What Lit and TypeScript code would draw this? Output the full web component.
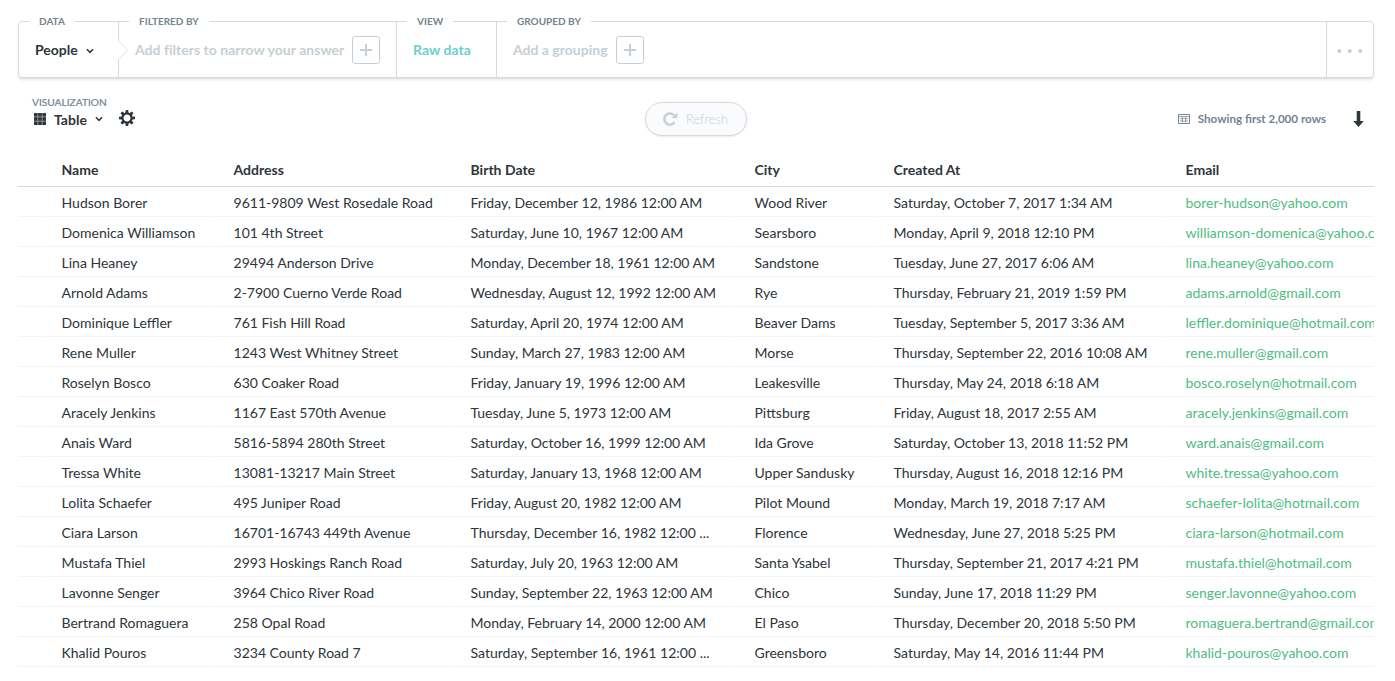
import { LitElement, html, css, svg } from "lit";
import { customElement } from "lit/decorators.js";

const COLUMNS = ["Name", "Address", "Birth Date", "City", "Created At", "Email"];

const ROWS: string[][] = [
  ["Hudson Borer", "9611-9809 West Rosedale Road", "Friday, December 12, 1986 12:00 AM", "Wood River", "Saturday, October 7, 2017 1:34 AM", "borer-hudson@yahoo.com"],
  ["Domenica Williamson", "101 4th Street", "Saturday, June 10, 1967 12:00 AM", "Searsboro", "Monday, April 9, 2018 12:10 PM", "williamson-domenica@yahoo.com"],
  ["Lina Heaney", "29494 Anderson Drive", "Monday, December 18, 1961 12:00 AM", "Sandstone", "Tuesday, June 27, 2017 6:06 AM", "lina.heaney@yahoo.com"],
  ["Arnold Adams", "2-7900 Cuerno Verde Road", "Wednesday, August 12, 1992 12:00 AM", "Rye", "Thursday, February 21, 2019 1:59 PM", "adams.arnold@gmail.com"],
  ["Dominique Leffler", "761 Fish Hill Road", "Saturday, April 20, 1974 12:00 AM", "Beaver Dams", "Tuesday, September 5, 2017 3:36 AM", "leffler.dominique@hotmail.com"],
  ["Rene Muller", "1243 West Whitney Street", "Sunday, March 27, 1983 12:00 AM", "Morse", "Thursday, September 22, 2016 10:08 AM", "rene.muller@gmail.com"],
  ["Roselyn Bosco", "630 Coaker Road", "Friday, January 19, 1996 12:00 AM", "Leakesville", "Thursday, May 24, 2018 6:18 AM", "bosco.roselyn@hotmail.com"],
  ["Aracely Jenkins", "1167 East 570th Avenue", "Tuesday, June 5, 1973 12:00 AM", "Pittsburg", "Friday, August 18, 2017 2:55 AM", "aracely.jenkins@gmail.com"],
  ["Anais Ward", "5816-5894 280th Street", "Saturday, October 16, 1999 12:00 AM", "Ida Grove", "Saturday, October 13, 2018 11:52 PM", "ward.anais@gmail.com"],
  ["Tressa White", "13081-13217 Main Street", "Saturday, January 13, 1968 12:00 AM", "Upper Sandusky", "Thursday, August 16, 2018 12:16 PM", "white.tressa@yahoo.com"],
  ["Lolita Schaefer", "495 Juniper Road", "Friday, August 20, 1982 12:00 AM", "Pilot Mound", "Monday, March 19, 2018 7:17 AM", "schaefer-lolita@hotmail.com"],
  ["Ciara Larson", "16701-16743 449th Avenue", "Thursday, December 16, 1982 12:00 ...", "Florence", "Wednesday, June 27, 2018 5:25 PM", "ciara-larson@hotmail.com"],
  ["Mustafa Thiel", "2993 Hoskings Ranch Road", "Saturday, July 20, 1963 12:00 AM", "Santa Ysabel", "Thursday, September 21, 2017 4:21 PM", "mustafa.thiel@hotmail.com"],
  ["Lavonne Senger", "3964 Chico River Road", "Sunday, September 22, 1963 12:00 AM", "Chico", "Sunday, June 17, 2018 11:29 PM", "senger.lavonne@yahoo.com"],
  ["Bertrand Romaguera", "258 Opal Road", "Monday, February 14, 2000 12:00 AM", "El Paso", "Thursday, December 20, 2018 5:50 PM", "romaguera.bertrand@gmail.com"],
  ["Khalid Pouros", "3234 County Road 7", "Saturday, September 16, 1961 12:00 ...", "Greensboro", "Saturday, May 14, 2016 11:44 PM", "khalid-pouros@yahoo.com"],
];

const chevron = html`<svg class="chevron" width="8" height="8" viewBox="0 0 8 8">
  <path d="M0.9 2.3 L4 5.4 L7.1 2.3" fill="none" stroke="currentColor" stroke-width="1.5" />
</svg>`;

const plus = html`<span class="plus"><svg width="12" height="12" viewBox="0 0 12 12">
  <path d="M6 0V12M0 6H12" stroke="currentColor" stroke-width="2" />
</svg></span>`;

const gear = html`<svg class="gear" width="16" height="16" viewBox="-8 -8 16 16">
  <circle r="4.6" fill="none" stroke="currentColor" stroke-width="2.2" />
  ${[0, 45, 90, 135, 180, 225, 270, 315].map(
    (a) => svg`<path d="M-1.6 -5 L-1.2 -8 H1.2 L1.6 -5Z" fill="currentColor" transform="rotate(${a})" />`
  )}
</svg>`;

@customElement("app-root")
export class AppRoot extends LitElement {
  static styles = css`
    :host {
      display: block;
      box-sizing: border-box;
      width: 100%;
      height: 681px;
      padding: 21px 21px 0 18px;
      overflow: hidden;
      background: #fff;
      color: #2e353b;
      font: 14px/17px Lato, sans-serif;
    }
    svg { display: block; flex: none; }
    .bar {
      display: flex;
      box-sizing: border-box;
      height: 57px;
      border: 1px solid #d5dae0;
      border-radius: 4px;
      box-shadow: 0 1px 0 #dfe3e7, 0 2px 3px rgba(0, 0, 0, 0.09);
      font-weight: 700;
    }
    .section {
      position: relative;
      display: flex;
      align-items: center;
      box-sizing: border-box;
      padding: 0 16px;
      border-right: 1px solid #d5dae0;
    }
    .legend {
      position: absolute;
      top: -8px;
      left: 10px;
      padding: 0 10px;
      background: #fff;
      color: #74838f;
      font-size: 10px;
      line-height: 14px;
      white-space: nowrap;
    }
    .data { width: 100px; }
    .filters { width: 278px; }
    .view { width: 100px; color: #6bd0cf; letter-spacing: 0.06px; }
    .view .legend { letter-spacing: 0; }
    .groups { flex: 1; }
    .more { width: 46px; padding: 3px 0 0; justify-content: center; border-right: 0; color: #c7cfd4; }
    .notch { position: absolute; left: -1px; top: 18px; }
    .muted { color: #c7cfd4; white-space: nowrap; }
    .filters .muted { letter-spacing: 0.025px; }
    .chevron { margin: 2px 0 0 8px; }
    .plus {
      display: flex;
      flex: none;
      align-items: center;
      justify-content: center;
      box-sizing: border-box;
      width: 28px;
      height: 28px;
      margin-left: 8px;
      border: 1px solid #c7cfd4;
      border-radius: 3px;
      color: #c7cfd4;
    }
    .tools {
      display: grid;
      grid-template-columns: 1fr auto 1fr;
      height: 76px;
    }
    .viz { padding: 18px 0 0 14px; }
    .viz-label { font-size: 10.2px; line-height: 13px; color: #74838f; -webkit-text-stroke: 0.2px #74838f; }
    .viz-row { display: flex; align-items: center; height: 18px; padding: 1px 0 0 2px; font-weight: 700; }
    .viz-row .chevron { margin-top: 0; }
    .viz-name { margin-left: 8px; padding-top: 2px; line-height: 18px; }
    .gear { margin: -2px 0 0 16px; }
    .refresh {
      display: flex;
      align-items: center;
      box-sizing: border-box;
      width: 102px;
      height: 34px;
      margin-top: 24px;
      padding-left: 17px;
      border: 1px solid #d5dae0;
      border-radius: 17px;
      background: #f9fbfc;
      box-shadow: 0 1px 2px rgba(0, 0, 0, 0.08);
      color: #c7cfd4;
    }
    .refresh-text { margin-left: 8px; font-size: 12.9px; font-weight: 300; }
    .status {
      display: flex;
      align-items: center;
      justify-content: flex-end;
      height: 18px;
      margin-top: 32px;
      padding-right: 10.5px;
      color: #74838f;
      font-size: 11.62px;
      font-weight: 700;
    }
    .status-text { margin: 0 26.5px 0 7.5px; padding-bottom: 1px; }
    .table { overflow: hidden; font-size: 14.03px; }
    .row {
      display: grid;
      grid-template-columns: 25px 172px 237px 284px 139px 292px 208px;
      height: 30px;
    }
    .head { height: 33px; border-bottom: 1px solid #d5dae0; font-weight: 700; box-sizing: border-box; }
    .cell {
      box-sizing: border-box;
      margin-right: 1px;
      padding: 7px 0 0 18.5px;
      border-bottom: 1px solid #f2f3f4;
      white-space: nowrap;
    }
    .head .cell { border: 0; }
    .email { color: #4fbd83; }
  `;

  render() {
    return html`
      <div class="bar">
        <div class="section data"><span class="legend">DATA</span>People${chevron}</div>
        <div class="section filters">
          <svg class="notch" width="11" height="20" viewBox="0 0 11 20">
            <path d="M0 1H1V19H0Z" fill="#fff" />
            <path d="M0.5 0.5 L9.5 10 L0.5 19.5" fill="#fff" stroke="#e1e5e9" />
          </svg>
          <span class="legend">FILTERED BY</span>
          <span class="muted">Add filters to narrow your answer</span>${plus}
        </div>
        <div class="section view"><span class="legend">VIEW</span>Raw data</div>
        <div class="section groups">
          <span class="legend">GROUPED BY</span><span class="muted">Add a grouping</span>${plus}
        </div>
        <div class="section more">
          <svg width="26" height="4" viewBox="0 0 26 4" fill="currentColor">
            <circle cx="2.4" cy="2" r="2" /><circle cx="12.8" cy="2" r="2" /><circle cx="23.2" cy="2" r="2" />
          </svg>
        </div>
      </div>
      <div class="tools">
        <div class="viz">
          <div class="viz-label">VISUALIZATION</div>
          <div class="viz-row">
            <svg width="12" height="12" viewBox="0 0 12 12">
              <path d="M0 0H12V12H0Z" fill="#2e353b" />
              <path d="M3.8 0V12M8.2 0V12M0 3.8H12M0 8.2H12" stroke="#fff" stroke-width="0.6" opacity="0.7" />
            </svg>
            <span class="viz-name">Table</span>${chevron}${gear}
          </div>
        </div>
        <div class="refresh">
          <svg width="15" height="14" viewBox="0 0 15 14">
            <path d="M11.6 10.2 A5.6 5.6 0 1 1 11 3.2" fill="none" stroke="currentColor" stroke-width="2.4" />
            <path d="M14.3 0.4V6H8.5Z" fill="currentColor" />
          </svg>
          <span class="refresh-text">Refresh</span>
        </div>
        <div class="status">
          <svg width="12" height="10" viewBox="0 0 12 10" fill="none" stroke="currentColor">
            <path d="M0.5 0.5H11.5V9.5H0.5Z" />
            <path d="M1 2.5H11M2 4.7H10M2 7H10M4.3 2.5V8.5M7.7 2.5V8.5" stroke-width="0.7" />
          </svg>
          <span class="status-text">Showing first 2,000 rows</span>
          <svg width="11" height="16" viewBox="0 0 11 16">
            <path d="M3.7 0H7.3V10H10.8L5.5 16L0.2 10H3.7Z" fill="#2e353b" />
          </svg>
        </div>
      </div>
      <div class="table">
        <div class="row head">
          <div class="cell"></div>
          ${COLUMNS.map((c) => html`<div class="cell">${c}</div>`)}
        </div>
        ${ROWS.map(
          (r) => html`<div class="row">
            <div class="cell"></div>
            ${r.map((c, i) => html`<div class="cell ${i === 5 ? "email" : ""}">${c}</div>`)}
          </div>`
        )}
      </div>
    `;
  }
}
